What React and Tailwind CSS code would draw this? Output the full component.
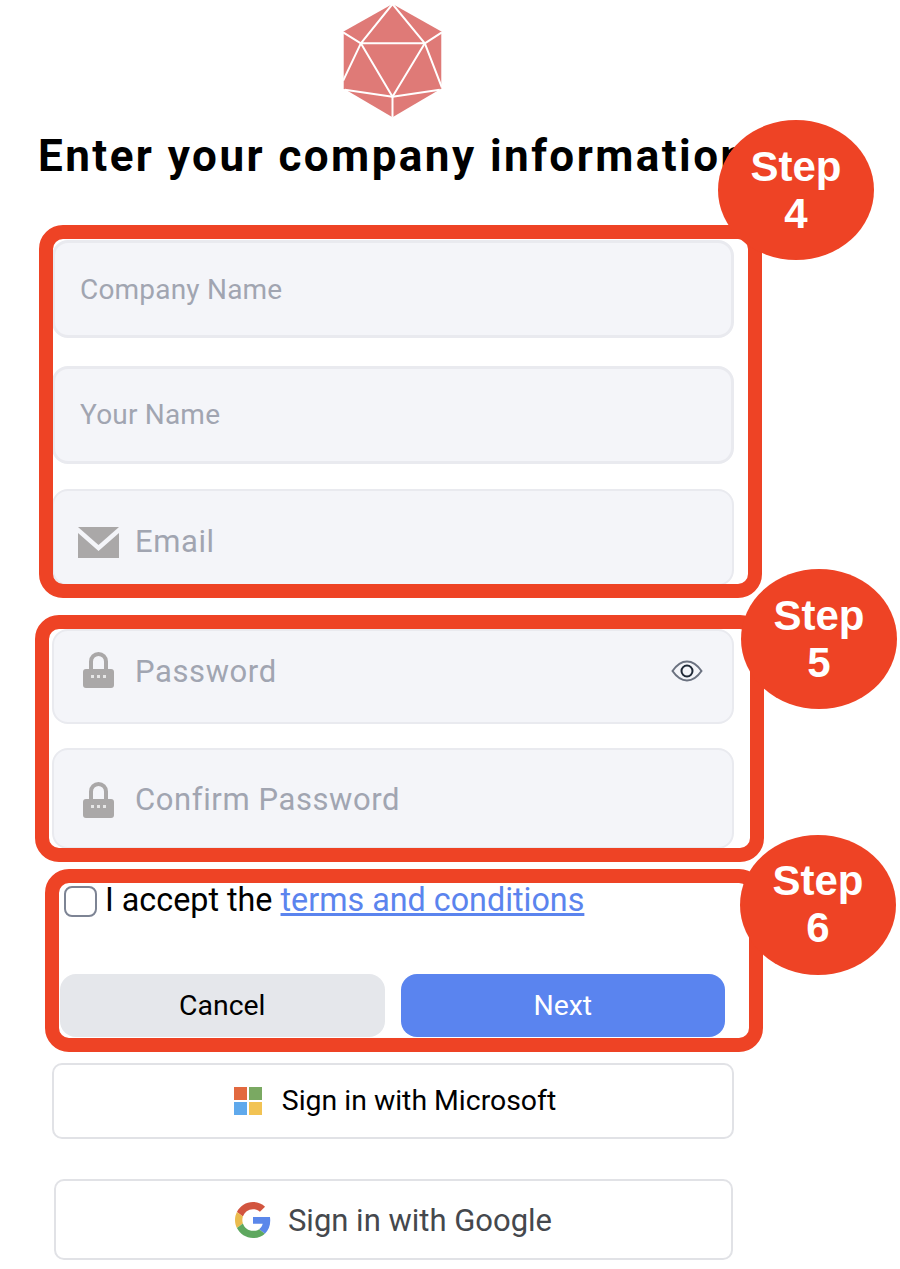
import React from 'react';

const Logo = () => (
  <svg viewBox="130 15 296 342" className="ml-[342px] h-[114px] w-[101px]">
    <polygon points="278,15 426,98 426,268 278,355 130,268 130,98" fill="#df7a77" />
    <g stroke="#fff" strokeWidth="6" fill="none" strokeLinejoin="round">
      <path d="M278 15 183 133H375L278 15" />
      <path d="M130 100 183 133 130 245" />
      <path d="M426 100 375 133 426 265" />
      <path d="M183 133 278 293 375 133" />
      <path d="M135 272 278 293 420 272" />
      <path d="M278 293V355" />
      <path d="M130 98V268M426 98V268" strokeWidth="3" />
    </g>
  </svg>
);

const MailIcon = () => (
  <svg viewBox="0 0 41 31" className="h-[31px] w-[41px]">
    <path d="M0 0H41L20.5 18Z" fill="#aaa8a8" />
    <path d="M0 6 20.5 24 41 6V31H0Z" fill="#aaa8a8" />
  </svg>
);

const LockIcon = ({ className }) => (
  <svg viewBox="0 0 31 36" className={`h-[36px] w-[31px] ${className}`}>
    <path d="M8 20V9.500a7.500 7.500 0 0 1 15 0V20" fill="none" stroke="#aaa8a8" strokeWidth="4" />
    <rect x="0" y="17" width="31" height="19" rx="3" fill="#aaa8a8" />
    <rect x="8" y="23" width="3" height="3" fill="#e6e6e6" />
    <rect x="14" y="23" width="3" height="3" fill="#e6e6e6" />
    <rect x="20" y="23" width="3" height="3" fill="#e6e6e6" />
  </svg>
);

const EyeIcon = () => (
  <svg viewBox="0 0 32 22" className="mb-[4px] h-[22px] w-[32px]">
    <path d="M1.500 11C6 4.500 10.500 1.500 16 1.500S26 4.500 30.500 11C26 17.500 21.500 20.500 16 20.500S6 17.500 1.500 11Z" fill="none" stroke="#6b7280" strokeWidth="2" />
    <circle cx="16" cy="11" r="5.500" fill="none" stroke="#1f2937" strokeWidth="2" />
  </svg>
);

const MicrosoftIcon = () => (
  <svg viewBox="0 0 28 28" className="h-[28px] w-[28px]">
    <rect width="13" height="13" fill="#e2693f" />
    <rect x="15" width="13" height="13" fill="#7aa962" />
    <rect y="15" width="13" height="13" fill="#5fa9ec" />
    <rect x="15" y="15" width="13" height="13" fill="#f2c354" />
  </svg>
);

const GoogleIcon = () => (
  <svg viewBox="0 0 48 48" className="h-[36px] w-[36px]">
    <path fill="#d2553f" d="M24 9.500c3.540 0 6.710 1.220 9.210 3.600l6.850-6.850C35.900 2.380 30.470 0 24 0 14.620 0 6.510 5.380 2.560 13.220l7.980 6.190C12.430 13.720 17.740 9.500 24 9.500z" />
    <path fill="#5b87ea" d="M46.980 24.550c0-1.570-.15-3.090-.38-4.550H24v9.020h12.940c-.58 2.960-2.260 5.480-4.780 7.180l7.730 6c4.510-4.180 7.090-10.360 7.090-17.650z" />
    <path fill="#eabb4e" d="M10.530 28.590c-.48-1.450-.76-2.990-.76-4.590s.27-3.140.76-4.590l-7.980-6.190C.92 16.460 0 20.120 0 24c0 3.880.92 7.540 2.560 10.780l7.970-6.190z" />
    <path fill="#5ea85f" d="M24 48c6.480 0 11.930-2.130 15.890-5.810l-7.730-6c-2.150 1.450-4.920 2.300-8.160 2.300-6.260 0-11.570-4.220-13.470-9.910l-7.980 6.190C6.510 42.620 14.620 48 24 48z" />
  </svg>
);

const Field = ({ placeholder, icon, right, className }) => (
  <div className={`flex items-center rounded-[16px] border-[#e9eaef] bg-[#f4f5f9] ${className}`}>
    {icon}
    <input
      placeholder={placeholder}
      className="min-w-0 flex-1 bg-transparent text-[31px] tracking-[0.6px] outline-none placeholder:text-[#a1a5b1]"
    />
    {right}
  </div>
);

const Step = ({ n, className }) => (
  <div className={`absolute flex h-[140px] w-[156px] items-center justify-center rounded-[50%] bg-[#ee4325] text-center font-['Liberation_Sans',sans-serif] text-[42px] leading-[47px] font-bold text-white ${className}`}>
    <div>Step<br />{n}</div>
  </div>
);

const App = () => {
  return (
    <div className="relative h-[1269px] w-[900px] overflow-hidden bg-white pt-[4px] font-['Roboto',sans-serif]">
      <Logo />
      <h1 className="mt-[12px] ml-[38px] text-[44px] leading-[52px] font-bold tracking-[2.450px] whitespace-nowrap text-black">
        Enter your company information
      </h1>

      <div className="mt-[58px] ml-[52px] w-[682px]">
        <Field placeholder="Company Name" className="h-[98px] border-[3px] pt-[2px] pl-[25px] [&_input]:text-[28px] [&_input]:tracking-[0.2px]" />
        <Field placeholder="Your Name" className="mt-[28px] h-[98px] border-[3px] pl-[25px] [&_input]:text-[28px] [&_input]:tracking-[0.2px]" />
        <Field
          placeholder="Email"
          icon={<MailIcon />}
          className="mt-[25px] h-[97px] gap-[16px] border-2 pt-[10px] pl-[24px]"
        />
        <Field
          placeholder="Password"
          icon={<LockIcon className="mb-[6px]" />}
          right={<EyeIcon />}
          className="mt-[43px] h-[95px] gap-[21px] border-2 pr-[29px] pb-[8px] pl-[29px]"
        />
        <Field
          placeholder="Confirm Password"
          icon={<LockIcon className="mb-[2px]" />}
          className="mt-[24px] h-[101px] gap-[21px] border-2 pt-[4px] pl-[29px]"
        />
      </div>

      <label className="mt-[36px] ml-[64px] flex h-[32px] items-center gap-[8px] text-[32.300px] text-black">
        <input type="checkbox" className="h-[31px] w-[33px] appearance-none rounded-[8px] border-2 border-[#7d8494] bg-white" />
        <span className="-mt-[2px]">
          I accept the{' '}
          <a href="#terms" className="text-[#5b84ee] underline underline-offset-2">terms and conditions</a>
        </span>
      </label>

      <div className="mt-[57px] ml-[60px] flex w-[665px] gap-[16px]">
        <button className="h-[63px] flex-1 rounded-[16px] bg-[#e5e7eb] pt-[2px] text-[28.400px] text-black">Cancel</button>
        <button className="h-[63px] flex-1 rounded-[16px] bg-[#5a84ef] pt-[2px] text-[28.400px] text-white">Next</button>
      </div>

      <button className="mt-[26px] ml-[52px] flex h-[76px] w-[682px] items-center justify-center gap-[20px] rounded-[10px] border-2 border-[#e1e2e6] bg-white pl-[4px] text-[28.400px] text-black">
        <MicrosoftIcon />
        Sign in with Microsoft
      </button>

      <button className="mt-[40px] ml-[54px] flex h-[81px] w-[679px] items-center justify-center gap-[17px] rounded-[10px] border-2 border-[#e1e2e6] bg-white text-[31px] text-[#45484d]">
        <GoogleIcon />
        <span className="pt-[4px]">Sign in with Google</span>
      </button>

      {/* annotation frames drawn over the form */}
      <div className="absolute top-[225px] left-[39px] h-[373px] w-[723px] rounded-[24px] border-[14px] border-[#ee4325]" />
      <div className="absolute top-[615px] left-[35px] h-[247px] w-[729px] rounded-[24px] border-[14px] border-[#ee4325]" />
      <div className="absolute top-[869px] left-[45px] h-[183px] w-[718px] rounded-[24px] border-[14px] border-[#ee4325]" />
      <Step n="4" className="top-[120px] left-[718px]" />
      <Step n="5" className="top-[569px] left-[741px] pb-[1px]" />
      <Step n="6" className="top-[835px] left-[740px] pb-[3px]" />
    </div>
  );
};

export default App;
